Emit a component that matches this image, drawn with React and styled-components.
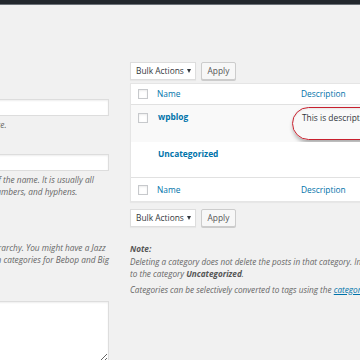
import React from 'react';
import styled, { createGlobalStyle } from 'styled-components';

const GlobalStyle = createGlobalStyle`
  html, body {
    margin: 0;
    padding: 0;
  }
  body {
    background: #f1f1f1;
    color: #444;
    font-family: "Open Sans", "Segoe UI", sans-serif;
    font-size: 8.4px;
    line-height: 12px;
    overflow: hidden;
  }
`;

const AdminBar = styled.div`
  height: 4px;
  background: #23282d;
  border-bottom: 1px solid #6b7177;
`;

const Columns = styled.div`
  display: flex;
  gap: 21px;
  width: 360px;
  height: 355px;
  overflow: hidden;
`;

const ColLeft = styled.div`
  flex: 0 0 116px;
  margin-right: -7px;
  display: flex;
  justify-content: flex-end;
  overflow: hidden;
`;

const FormWrap = styled.div`
  flex: 0 0 236px;
  padding: 79px 7px 0 0;
`;

const FormField = styled.div`
  margin-bottom: 8px;
`;

const Label = styled.label`
  display: block;
  height: 12px;
  margin-bottom: 3px;
  color: #23282d;
`;

const TextInput = styled.input`
  display: block;
  width: 100%;
  height: 17px;
  margin: 0;
  box-sizing: border-box;
  border: 1px solid #ddd;
  background: #fff;
  box-shadow: inset 0 1px 2px rgba(0, 0, 0, 0.07);
  outline: none;
`;

const ParentSelect = styled.div`
  width: 90px;
  height: 18px;
  box-sizing: border-box;
  border: 1px solid #ddd;
  background: #fff;
`;

const TextArea = styled.textarea`
  display: block;
  width: 100%;
  height: 62px;
  margin: 0;
  box-sizing: border-box;
  border: 1px solid #ddd;
  background: #fff;
  box-shadow: inset 0 1px 2px rgba(0, 0, 0, 0.07);
  resize: vertical;
  outline: none;
`;

const Help = styled.p`
  margin: 3px 0 0;
  font-style: italic;
  font-size: 8.3px;
  color: #666;
  white-space: nowrap;
`;

const ColRight = styled.div`
  flex: 0 0 420px;
  padding-top: 57px;
`;

const TableNav = styled.div`
  display: flex;
  gap: 5px;
  height: 18px;
  margin: ${p => p.$bottom ? '7px 0 0' : '0 0 3px'};
`;

const Select = styled.div`
  display: flex;
  align-items: center;
  justify-content: space-between;
  width: 66px;
  box-sizing: border-box;
  padding: 0 4px 0 5px;
  border: 1px solid #ddd;
  background: #fff;
  color: #32373c;
  box-shadow: 0 1px 1px rgba(0, 0, 0, 0.04);
`;

const Caret = styled.span`
  width: 0;
  height: 0;
  border-left: 2.5px solid transparent;
  border-right: 2.5px solid transparent;
  border-top: 4px solid #32373c;
`;

const Button = styled.button`
  width: 35px;
  height: 18px;
  padding: 0;
  box-sizing: border-box;
  border: 1px solid #ccc;
  border-radius: 2px;
  background: #f7f7f7;
  box-shadow: 0 1px 0 #ccc;
  color: #555;
  font: inherit;
`;

const ListTable = styled.div`
  background: #fff;
  border: 1px solid #e5e5e5;
  box-shadow: 0 1px 1px rgba(0, 0, 0, 0.04);
`;

const Row = styled.div`
  position: relative;
  display: grid;
  grid-template-columns: 26px 144px 1fr;
  align-items: ${p => p.$edge ? 'center' : 'start'};
  height: ${p => p.$h}px;
  box-sizing: border-box;
  padding-top: ${p => p.$edge ? 0 : 6}px;
  background: ${p => p.$alt ? '#f9f9f9' : '#fff'};
  border-bottom: ${p => p.$head ? '1px solid #e1e1e1' : 'none'};
  border-top: ${p => p.$foot ? '1px solid #e1e1e1' : 'none'};
`;

const CheckCell = styled.div`
  display: flex;
  justify-content: flex-end;
  padding-right: 9px;
  padding-top: ${p => p.$offset || 0}px;
`;

const Checkbox = styled.span`
  display: block;
  width: 10px;
  height: 10px;
  box-sizing: border-box;
  border: 1px solid #c7c9cc;
  background: #fff;
  box-shadow: inset 0 1px 2px rgba(0, 0, 0, 0.08);
`;

const ColLink = styled.a`
  color: #0073aa;
  text-decoration: none;
`;

const RowTitle = styled.a`
  color: #0073aa;
  font-weight: 700;
  text-decoration: none;
  padding-left: 1px;
`;

const DescCell = styled.div`
  color: #32373c;
  padding-left: 1px;
  padding-top: 1px;
  white-space: nowrap;
`;

const Annotation = styled.div`
  position: absolute;
  top: 2px;
  left: 161px;
  width: 150px;
  height: 33px;
  box-sizing: border-box;
  border: 1.7px solid #c8202e;
  border-radius: 17px;
  box-shadow: 1px 3px 4px rgba(0, 0, 0, 0.32), inset 0 1px 2px rgba(0, 0, 0, 0.08);
  pointer-events: none;
`;

const FormNote = styled.div`
  margin-top: 16px;
  font-style: italic;
  font-size: 8.2px;
  color: #666;
  line-height: 12.5px;
  white-space: nowrap;
`;

const NoteP = styled.p`
  margin: 0 0 3px;
  strong {
    color: #555;
  }
`;

const NoteLink = styled.a`
  color: #0073aa;
  text-decoration: underline;
`;

const BulkNav = ({ bottom }) => (
  <TableNav $bottom={bottom}>
    <Select>
      Bulk Actions
      <Caret />
    </Select>
    <Button>Apply</Button>
  </TableNav>
);

const App = () => (
  <>
    <GlobalStyle />
    <AdminBar />
    <Columns>
      <ColLeft>
        <FormWrap>
          <FormField>
            <Label>Name</Label>
            <TextInput />
            <Help>The name is how it appears on your site.</Help>
          </FormField>
          <FormField>
            <Label>Slug</Label>
            <TextInput />
            <Help>
              The “slug” is the URL-friendly version of the name. It is usually all
              <br />
              lowercase and contains only letters, numbers, and hyphens.
            </Help>
          </FormField>
          <FormField>
            <Label>Parent Category</Label>
            <ParentSelect />
            <Help>
              Categories, unlike tags, can have a hierarchy. You might have a Jazz
              <br />
              category, and under that have children categories for Bebop and Big
              <br />
              Band. Totally optional.
            </Help>
          </FormField>
          <FormField>
            <Label>Description</Label>
            <TextArea />
          </FormField>
        </FormWrap>
      </ColLeft>

      <ColRight>
        <BulkNav />
        <ListTable>
          <Row $head $edge $h={21}>
            <CheckCell><Checkbox /></CheckCell>
            <ColLink href="#">Name</ColLink>
            <ColLink href="#">Description</ColLink>
          </Row>
          <Row $alt $h={37}>
            <CheckCell $offset={2}><Checkbox /></CheckCell>
            <RowTitle href="#">wpblog</RowTitle>
            <DescCell>This is description</DescCell>
            <Annotation />
          </Row>
          <Row $h={35}>
            <CheckCell />
            <RowTitle href="#">Uncategorized</RowTitle>
            <DescCell />
          </Row>
          <Row $foot $edge $h={24}>
            <CheckCell><Checkbox /></CheckCell>
            <ColLink href="#">Name</ColLink>
            <ColLink href="#">Description</ColLink>
          </Row>
        </ListTable>
        <BulkNav bottom />

        <FormNote>
          <NoteP>
            <strong>Note:</strong>
            <br />
            Deleting a category does not delete the posts in that category. Instead, posts that were only assigned to the deleted category are set
            <br />
            to the category <strong>Uncategorized</strong>.
          </NoteP>
          <NoteP>
            Categories can be selectively converted to tags using the <NoteLink href="#">category to tag converter</NoteLink>.
          </NoteP>
        </FormNote>
      </ColRight>
    </Columns>
  </>
);

export default App;
